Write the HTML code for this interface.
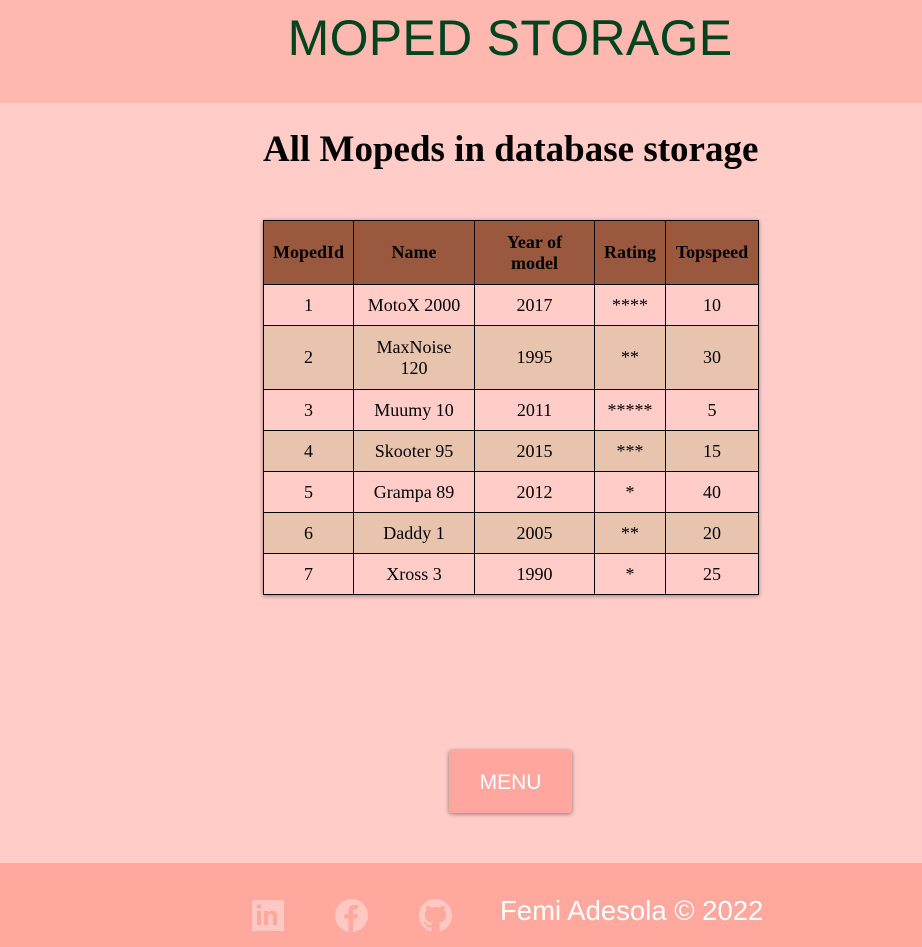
<!DOCTYPE html>
<html><head><style>
*{margin:0;padding:0;box-sizing:border-box}
body{width:922px;height:947px;background:#ffccc7;position:relative;overflow:hidden;font-family:"Liberation Serif",serif}
.hd{position:absolute;left:0;top:0;width:922px;height:103px;background:#ffb8b0}
.hd h1{position:absolute;left:0;width:1020px;text-align:center;top:9px;font:400 50px "Liberation Sans",sans-serif;color:#00441f;letter-spacing:0.3px}
h2{position:absolute;left:263px;top:128px;font:700 37px "Liberation Serif",serif;color:#000;white-space:nowrap}
table{position:absolute;left:263px;top:220px;border-collapse:collapse;box-shadow:0 1px 4px rgba(0,0,0,.4);font-size:18px}
td,th{border:1px solid #000;text-align:center;vertical-align:middle}
th{background:#9a583e;height:64px;font-weight:700;line-height:21px}
td{height:41px;line-height:21px}
tr.a td{background:#ffccc7}
tr.b td{background:#e8c4ae}
.btn{position:absolute;left:449px;top:750px;width:123px;height:63px;background:#ffa69e;border-radius:3px;box-shadow:0 1px 4px rgba(0,0,0,.45);color:#fff;font:400 21px "Liberation Sans",sans-serif;text-align:center;line-height:65px}
.ft{position:absolute;left:0;top:863px;width:922px;height:84px;background:#ffa89e}
.ft span{position:absolute;left:500px;top:32px;color:#fff;font:400 27.5px "Liberation Sans",sans-serif}
.ft svg{position:absolute;top:36px}
</style></head><body>
<div class="hd"><h1>MOPED STORAGE</h1></div>
<h2>All Mopeds in database storage</h2>
<table>
<tr><th style="width:90px">MopedId</th><th style="width:121px">Name</th><th style="width:120px">Year of<br>model</th><th style="width:71px">Rating</th><th style="width:93px">Topspeed</th></tr>
<tr class="a"><td>1</td><td>MotoX 2000</td><td>2017</td><td>****</td><td>10</td></tr>
<tr class="b"><td style="height:64px">2</td><td>MaxNoise<br>120</td><td>1995</td><td>**</td><td>30</td></tr>
<tr class="a"><td>3</td><td>Muumy 10</td><td>2011</td><td>*****</td><td>5</td></tr>
<tr class="b"><td>4</td><td>Skooter 95</td><td>2015</td><td>***</td><td>15</td></tr>
<tr class="a"><td>5</td><td>Grampa 89</td><td>2012</td><td>*</td><td>40</td></tr>
<tr class="b"><td>6</td><td>Daddy 1</td><td>2005</td><td>**</td><td>20</td></tr>
<tr class="a"><td>7</td><td>Xross 3</td><td>1990</td><td>*</td><td>25</td></tr>
</table>
<div class="btn">MENU</div>
<div class="ft">
<svg style="left:252px" width="32" height="32" viewBox="0 0 32 32"><rect x="0" y="1" width="32" height="31" rx="2" fill="#ffc8c2"/><rect x="5" y="12" width="4" height="14" fill="#ffa89e"/><circle cx="7" cy="7.5" r="2.3" fill="#ffa89e"/><path d="M12 12h4v2c1-1.5 2.5-2.3 4.5-2.3 3.5 0 4.5 2.3 4.5 5.5V26h-4v-8c0-2-.7-3-2.3-3s-2.7 1.2-2.7 3v8h-4z" fill="#ffa89e"/></svg>
<svg style="left:335px" width="33" height="33" viewBox="0 0 32 32"><circle cx="16" cy="16" r="16" fill="#ffc8c2"/><path d="M17.5 32V19h4l.6-4.3h-4.6v-2.8c0-1.2.4-2.1 2.2-2.1h2.4V6c-.4 0-1.900-.2-3.5-.2-3.4 0-5.6 2-5.6 5.8v3.1H9V19h4v13z" fill="#ffa89e"/></svg>
<svg style="left:419px" width="33" height="33" viewBox="0 0 16 16"><path fill="#ffc8c2" d="M8 0C3.58 0 0 3.58 0 8c0 3.540 2.290 6.530 5.470 7.590.4.07.55-.17.55-.38 0-.19-.01-.82-.01-1.49-2.01.37-2.53-.49-2.69-.94-.09-.23-.48-.94-.82-1.13-.28-.15-.68-.52-.01-.53.63-.01 1.080.58 1.230.82.72 1.210 1.870.87 2.330.66.07-.52.28-.87.51-1.07-1.78-.2-3.64-.89-3.64-3.95 0-.87.31-1.59.82-2.15-.08-.2-.36-1.02.08-2.12 0 0 .67-.21 2.2.82.64-.18 1.32-.27 2-.27s1.36.09 2 .27c1.53-1.04 2.2-.82 2.2-.82.44 1.1.16 1.92.08 2.12.51.56.82 1.27.82 2.15 0 3.07-1.87 3.75-3.65 3.95.29.25.54.73.54 1.48 0 1.07-.01 1.93-.01 2.2 0 .21.15.46.55.38A8.013 8.013 0 0016 8c0-4.42-3.58-8-8-8z"/></svg>
<span>Femi Adesola © 2022</span>
</div>
</body></html>
